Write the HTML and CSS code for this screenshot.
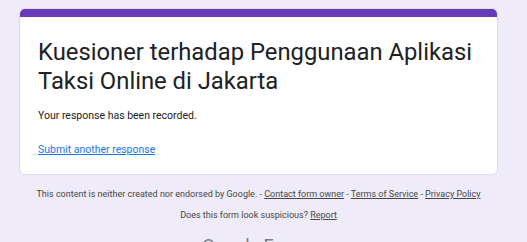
FILE: index.html
```html
<!DOCTYPE html>
<html lang="id">
  <head>
    <meta charset="UTF-8" />
    <meta name="viewport" content="width=device-width, initial-scale=1.0" />
    <title>Kuesioner terhadap Penggunaan Aplikasi Taksi Online di Jakarta</title>
    <link rel="stylesheet" href="styles.css">
  </head>
  <body>
    <main class="wrap">
      <section class="card">
        <div class="card-top"></div>
        <div class="card-body">
          <h1>Kuesioner terhadap Penggunaan Aplikasi Taksi Online di Jakarta</h1>
          <p class="done">Your response has been recorded.</p>
          <a class="again" href="#">Submit another response</a>
        </div>
      </section>
      <footer>
        <p>
          This content is neither created nor endorsed by Google. -
          <a href="#">Contact form owner</a> -
          <a href="#">Terms of Service</a> -
          <a href="#">Privacy Policy</a>
        </p>
        <p>Does this form look suspicious? <a href="#">Report</a></p>
        <div class="logo">Google Forms</div>
      </footer>
    </main>
  </body>
</html>
```

FILE: styles.css
```css
body {
  margin: 0;
  background-color: #f0ebf8;
  font-family: Roboto, "Liberation Sans", sans-serif;
  color: #202124;
}

.wrap {
  width: 479px;
  margin: 8px 0 0 19px;
}

.card {
  background-color: #fff;
  border: 1px solid #dadce0;
  border-radius: 6px;
  overflow: hidden;
}

.card-top {
  height: 8px;
  background-color: #673ab7;
}

.card-body {
  padding: 21px 18px 17px 18px;
}

h1 {
  margin: 0;
  font-size: 23.8px;
  font-weight: 400;
  line-height: 29px;
  color: #202124;
}

.done {
  margin: 12px 0 0 0;
  font-size: 10.5px;
  line-height: 15px;
}

.again {
  display: inline-block;
  margin-top: 19px;
  font-size: 10.5px;
  line-height: 15px;
  color: #1a73e8;
}

footer {
  text-align: center;
  padding-top: 9px;
}

footer p {
  margin: 0;
  font-size: 9px;
  line-height: 21px;
  color: #444746;
}

footer a {
  color: #444746;
}

.logo {
  margin-top: 9px;
  font-size: 18px;
  color: #5f6368;
  opacity: 0.8;
}
```
